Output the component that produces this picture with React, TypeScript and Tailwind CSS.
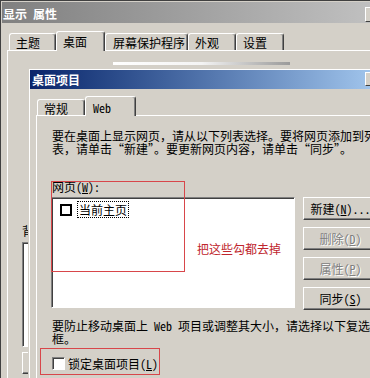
import type { ReactNode } from 'react';

function Tab({ children, className, active }: { children: ReactNode; className: string; active?: boolean }) {
  if (active) {
    return (
      <div
        className={`relative z-10 -mb-px h-[20px] shrink-0 rounded-t-[3px] border-t border-l border-r border-t-white border-l-white border-r-[#404040] bg-[#d4d0c8] pt-[3px] whitespace-nowrap shadow-[inset_-1px_0_#808080] ${className}`}
      >
        {children}
      </div>
    );
  }
  return (
    <div
      className={`h-[17px] shrink-0 rounded-t-[3px] border-t border-l border-r border-t-white border-l-white border-r-[#404040] pt-[2px] whitespace-nowrap shadow-[inset_-1px_0_#808080] ${className}`}
    >
      {children}
    </div>
  );
}

function Button({ children, disabled }: { children: ReactNode; disabled?: boolean }) {
  return (
    <div
      className={`flex h-[23px] w-[75px] items-center justify-center whitespace-nowrap border border-t-white border-l-white border-r-[#404040] border-b-[#404040] shadow-[inset_-1px_-1px_#808080] ${
        disabled ? 'text-[#808080] [text-shadow:1px_1px_0_#ffffff]' : ''
      }`}
    >
      {children}
    </div>
  );
}

export default function App() {
  return (
    <div className="relative h-[378px] w-[370px] overflow-hidden bg-[#d4d0c8] font-['Noto_Sans_Mono_CJK_SC','Noto_Sans_CJK_SC',sans-serif] text-[12px] leading-[13px] text-black">
      {/* 显示 属性 */}
      <div className="flex h-full flex-col border-t border-l border-[#404040] pt-px pl-px">
        <div className="relative flex h-[21px] shrink-0 items-center bg-linear-to-r from-[#808080] to-[#c0c0c0] pt-[2px] pl-px font-bold text-white">
          显示 属性
          <div className="absolute top-[5px] left-[363px] h-[15px] w-[16px] border border-t-white border-l-white border-r-[#404040] border-b-[#404040] bg-[#d4d0c8]" />
        </div>

        <div className="flex h-[27px] shrink-0 items-end pl-[7px]">
          <Tab className="w-[47px] pl-[6px]">主题</Tab>
          <Tab active className="w-[49px] pl-[6px]">桌面</Tab>
          <Tab className="w-[83px] pl-[7px]">屏幕保护程序</Tab>
          <Tab className="w-[48px] pl-[6px]">外观</Tab>
          <Tab className="w-[48px] pl-[6px]">设置</Tab>
        </div>

        <div className="ml-[5px] flex flex-1 flex-col border-t border-l border-white pl-[14px]">
          <div className="mt-[11px] ml-[91px] h-[3px] w-[177px] bg-linear-to-r from-white via-[#f4f4f4] to-[#9a9a9a]" />
          <p className="mt-[159px] whitespace-nowrap">背景(<u>K</u>):</p>
          <div className="mt-[5px] h-[105px] w-[200px] border border-t-[#808080] border-l-[#808080] border-b-white border-r-white bg-white shadow-[inset_1px_1px_#404040]" />
          <div className="mt-[5px] h-[22px] w-[75px] border border-t-white border-l-white border-r-[#404040] border-b-[#404040] shadow-[inset_-1px_-1px_#808080]" />
        </div>
      </div>

      {/* 桌面项目 */}
      <div className="absolute top-[68px] left-[28px] h-[330px] w-[355px] border-t border-l border-[#d4d0c8] bg-[#d4d0c8]">
        <div className="flex h-full flex-col border-t border-l border-white">
          <div className="relative flex h-[19px] shrink-0 items-center bg-linear-to-r from-[#0a246a] to-[#a6caf0] pl-[2px] font-bold text-white">
            桌面项目
            <div className="absolute top-[2px] right-[2px] h-[14px] w-[16px] border border-t-white border-l-white border-r-[#404040] border-b-[#404040] bg-[#d4d0c8]" />
          </div>

          <div className="flex h-[26px] shrink-0 items-end pl-[7px]">
            <Tab className="!h-[16px] w-[48px] pl-[6px]">常规</Tab>
            <Tab active className="w-[51px] !pt-[4px] pl-[7px]">Web</Tab>
          </div>

          <div className="ml-[6px] flex flex-1 flex-col border-t border-l border-white pt-[13px] pl-[15px]">
            <p className="whitespace-nowrap">
              要在桌面上显示网页，请从以下列表选择。要将网页添加到列
              <br />
              表，请单击“新建”。要更新网页内容，请单击“同步”。
            </p>
            <p className="mt-[25px] whitespace-nowrap">
              网页(<u>W</u>):
            </p>
            <div className="mt-[4px] -ml-px flex">
              <div className="h-[111px] w-[244px] shrink-0 border border-t-[#808080] border-l-[#808080] border-b-white border-r-white bg-white shadow-[inset_1px_1px_#404040]">
                <div className="flex items-center pt-[3px] pl-[8px]">
                  <span className="h-[12px] w-[12px] border-2 border-black bg-white" />
                  <span className="ml-[5px] border border-dotted border-black px-px pt-[1px] pb-[1px] whitespace-nowrap">
                    当前主页
                  </span>
                </div>
              </div>
              <div className="ml-[8px] flex flex-col gap-[7px]">
                <Button>
                  新建(<u>N</u>)...
                </Button>
                <Button disabled>
                  删除(<u>D</u>)
                </Button>
                <Button disabled>
                  属性(<u>P</u>)
                </Button>
                <Button>
                  同步(<u>S</u>)
                </Button>
              </div>
            </div>
            <p className="mt-[9px] whitespace-nowrap">
              要防止移动桌面上 Web 项目或调整其大小，请选择以下复选
              <br />
              框。
            </p>
            <div className="mt-[12px] flex items-center">
              <span className="h-[13px] w-[13px] shrink-0 border border-t-[#808080] border-l-[#808080] border-b-white border-r-white bg-white shadow-[inset_1px_1px_#404040]" />
              <span className="ml-[3px] whitespace-nowrap">
                锁定桌面项目(<u>L</u>)
              </span>
            </div>
          </div>
        </div>
      </div>

      {/* annotations */}
      <div className="absolute top-[181px] left-[51px] h-[91px] w-[134px] border border-[#d8464a]" />
      <p className="absolute top-[242px] left-[197px] whitespace-nowrap text-[#c0262e]">把这些勾都去掉</p>
      <div className="absolute top-[348px] left-[40px] h-[27px] w-[120px] border border-[#d8464a]" />
    </div>
  );
}
